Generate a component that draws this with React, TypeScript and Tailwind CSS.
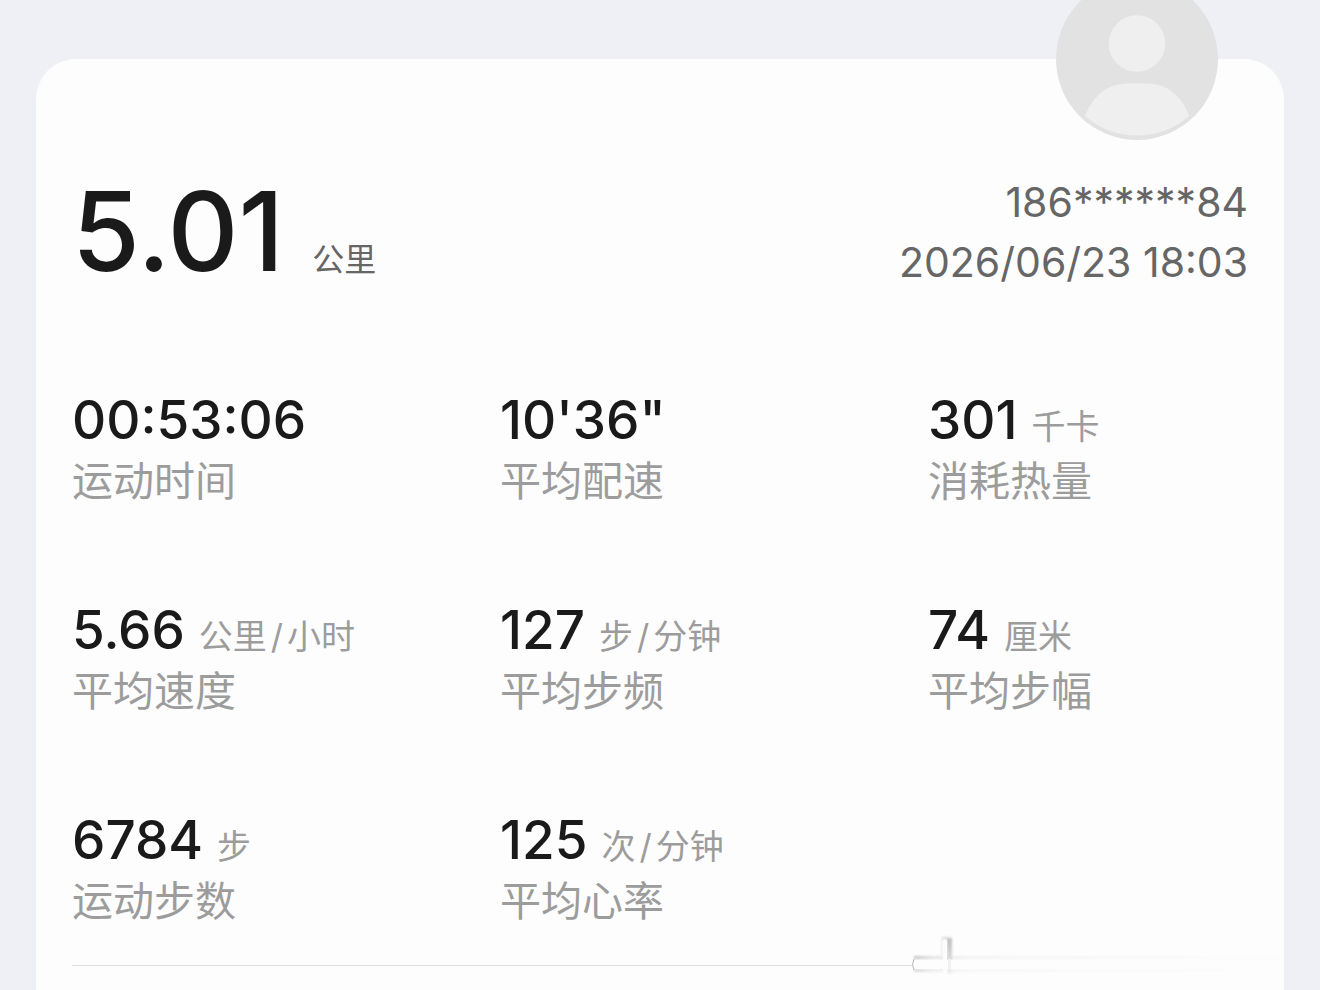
import { Fragment } from 'react'

type Metric = { value: string; unit?: string; label: string }

const metrics: Metric[] = [
  { value: '00:53:06', label: '运动时间' },
  { value: '10\'36"', label: '平均配速' },
  { value: '301', unit: '千卡', label: '消耗热量' },
  { value: '5.66', unit: '公里/小时', label: '平均速度' },
  { value: '127', unit: '步/分钟', label: '平均步频' },
  { value: '74', unit: '厘米', label: '平均步幅' },
  { value: '6784', unit: '步', label: '运动步数' },
  { value: '125', unit: '次/分钟', label: '平均心率' },
]

function Avatar() {
  return (
    <svg className="absolute right-[66px] -top-[81px] h-[162px] w-[162px]" viewBox="0 0 162 162" aria-hidden="true">
      <circle cx="81" cy="81" r="81" fill="#e2e2e2" />
      <circle cx="81" cy="65.5" r="28.3" fill="#efefef" />
      <path d="M29 138C37 118 51 105.500 72 105.500H91C111 105.500 126 118 133 138C104 164 58 164 29 138Z" fill="#efefef" />
    </svg>
  )
}

function Unit({ text }: { text: string }) {
  return (
    <span className="text-[34px] leading-none text-[#9c9c9c]">
      {text.split('/').map((part, i) => (
        <Fragment key={part}>
          {i > 0 && <span className="mx-1">/</span>}
          {part}
        </Fragment>
      ))}
    </span>
  )
}

function MetricItem({ value, unit, label }: Metric) {
  return (
    <div className="flex flex-col-reverse">
      <dt className="text-[41px] leading-[58px] text-[#9c9c9c]">{label}</dt>
      <dd className="flex h-16 items-baseline gap-[14px]">
        <span className="text-[53px] leading-[64px] font-medium text-[#1a1a1a]">{value}</span>
        {unit && <Unit text={unit} />}
      </dd>
    </div>
  )
}

// divider that fades out into a soft smudge on its right end
function Divider() {
  return (
    <div className="mt-[35px] -mr-9 flex">
      <hr className="flex-[840] border-[#dddddd]" />
      <svg className="-mt-8 h-12 min-w-0 flex-[372]" viewBox="0 0 372 48" preserveAspectRatio="xMinYMin meet" aria-hidden="true">
        <defs>
          <linearGradient id="fade" x1="0" x2="1" y1="0" y2="0">
            <stop offset="0" stopColor="#c6c6c6" />
            <stop offset="0.05" stopColor="#e4e4e4" />
            <stop offset="0.15" stopColor="#f3f3f3" />
            <stop offset="1" stopColor="#fcfcfc" />
          </linearGradient>
          <linearGradient id="stem" x1="0" x2="0" y1="0" y2="1">
            <stop offset="0" stopColor="#bcbcbc" />
            <stop offset="0.5" stopColor="#d6d6d6" />
            <stop offset="1" stopColor="#f2f2f2" />
          </linearGradient>
          <filter id="soft" x="-10%" y="-50%" width="120%" height="200%">
            <feGaussianBlur stdDeviation="1.2" />
          </filter>
        </defs>
        <g filter="url(#soft)">
          <rect x="2" y="23" width="368" height="3" fill="url(#fade)" />
          <rect x="2" y="36" width="368" height="3" fill="url(#fade)" opacity="0.7" />
          <rect x="35" y="5" width="5" height="36" fill="url(#stem)" />
          <rect x="29" y="5" width="2" height="34" fill="#ededed" />
          <rect x="30" y="4" width="9" height="2" fill="#d8d8d8" />
        </g>
        <rect x="2" y="27" width="368" height="9" rx="3" fill="#fdfdfd" />
        <rect x="36" y="26" width="3" height="11" fill="#f0f0f0" />
        <rect x="31" y="7" width="4" height="33" fill="#fcfcfc" />
        <path d="M2 26Q-1 32 2 37" fill="none" stroke="#b4b4b4" />
      </svg>
    </div>
  )
}

export default function App() {
  return (
    <main className="min-h-screen bg-[#eff0f5] px-9 pt-[59px] font-[Inter,'Noto_Sans_CJK_SC',sans-serif]">
      <section className="relative min-h-[calc(100vh-59px)] rounded-t-[40px] bg-[#fdfdfd] px-9 pt-[113px]">
        <Avatar />
        <header className="flex justify-between">
          <h1 className="flex h-[120px] items-baseline gap-7 text-[#1a1a1a]">
            <span className="text-[110px] leading-[118px] font-medium">5.01</span>
            <span className="text-[32px] leading-none font-normal text-[#666666]">公里</span>
          </h1>
          <div className="text-right text-[41px] leading-[60px] text-[#666666]">
            <p>186******84</p>
            <p>2026/06/23 18:03</p>
          </div>
        </header>
        <dl className="mt-24 grid grid-cols-[428fr_428fr_320fr] gap-y-[88px]">
          {metrics.map((m) => (
            <MetricItem key={m.label} {...m} />
          ))}
        </dl>
        <Divider />
      </section>
    </main>
  )
}
